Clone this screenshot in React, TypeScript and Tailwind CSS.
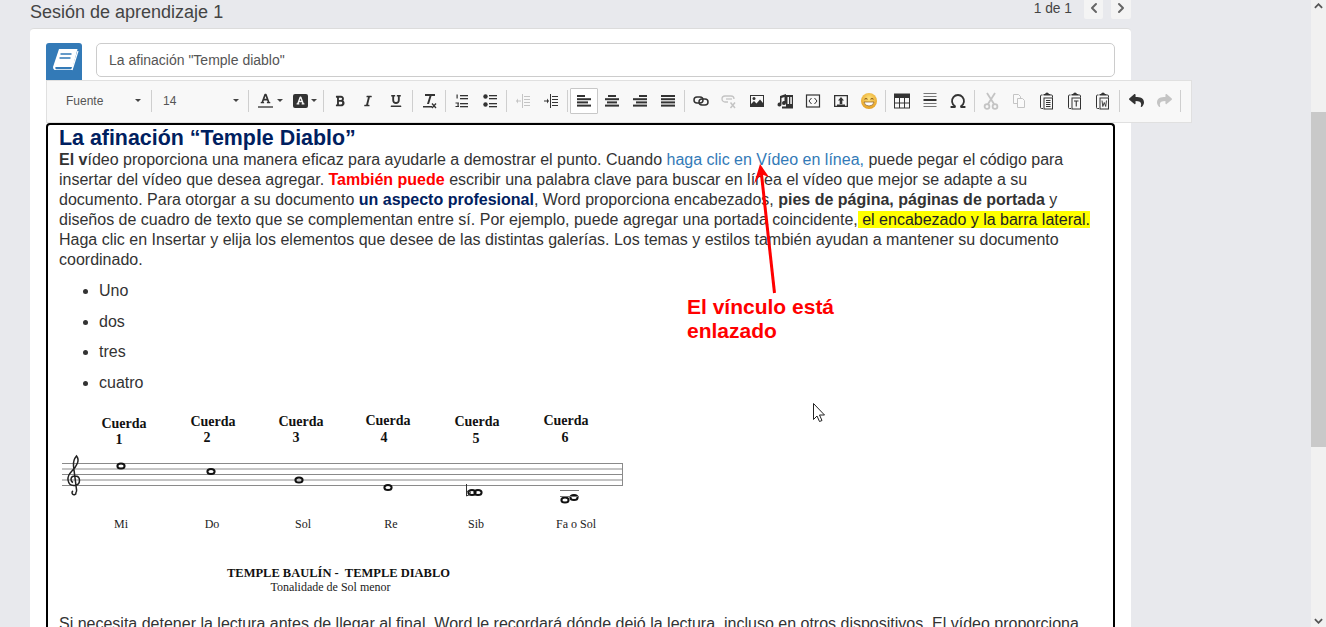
import type { ReactNode } from "react";
import { ChevronLeft, ChevronRight, Omega } from "lucide-react";
import { FaBold, FaFont, FaItalic, FaReply, FaShare, FaUnderline } from "react-icons/fa";

const DARK = "#333333";
const MUTED = "#c4c4c4";

function Icon({ children, muted }: { children: ReactNode; muted?: boolean }) {
  return (
    <svg viewBox="0 0 16 16" className="h-4 w-4" fill={muted ? MUTED : DARK} stroke="none">
      {children}
    </svg>
  );
}

function Btn({ children, active }: { children: ReactNode; active?: boolean }) {
  return (
    <div
      className={`flex h-[26px] w-[28px] shrink-0 items-center justify-center rounded-[1px] ${
        active ? "border border-[#c8c8c8] bg-white" : ""
      }`}
    >
      {children}
    </div>
  );
}

function Sep() {
  return <div className="mx-[2px] h-[22px] w-px shrink-0 bg-[#cfcfcf]" />;
}

function Caret() {
  return <div className="h-0 w-0 border-x-[3px] border-t-[3px] border-x-transparent border-t-[#444]" />;
}

function Lines({ rows }: { rows: [number, number][] }) {
  return (
    <Icon>
      {rows.map(([x, w], i) => (
        <rect key={i} x={x} y={2 + i * 3.2} width={w} height={2} />
      ))}
    </Icon>
  );
}

function Clipboard({ inner }: { inner: ReactNode }) {
  return (
    <svg viewBox="0 0 16 18" className="h-[18px] w-4" fill="none" stroke={DARK}>
      <path d="M3.500 3H2.500q-1 0-1 1v11.500q0 1 1 1H4M11.500 3h1q1 0 1 1v1.500" strokeWidth="1" />
      <path d="M4.500 3.500V2h1.500q.5-1.500 2-1.500t2 1.500h1.500v1.500z" fill={DARK} stroke="none" />
      <rect x="5" y="6" width="8.500" height="11" strokeWidth="1" />
      {inner}
    </svg>
  );
}

function Emoji() {
  return (
    <svg viewBox="0 0 18 18" className="h-[18px] w-[18px]">
      <defs>
        <radialGradient id="face" cx="50%" cy="35%" r="70%">
          <stop offset="0%" stopColor="#ffe27a" />
          <stop offset="100%" stopColor="#e39a1c" />
        </radialGradient>
      </defs>
      <circle cx="9" cy="9" r="8" fill="url(#face)" />
      <path d="M4.500 7.200q1.500-1.300 3 0M10.500 7.200q1.500-1.300 3 0" fill="none" stroke="#7a4a10" strokeWidth="1" />
      <path d="M4 10h10q-.500 4-5 4t-5-4z" fill="#fff" stroke="#8a5a1a" strokeWidth=".7" />
    </svg>
  );
}

function Toolbar() {
  return (
    <div className="relative z-10 flex h-[43px] w-[1146px] items-center border border-[#e0e0e0] bg-[#f8f8f8] pb-[2px] pl-[19px] text-[12px] text-[#555]">
      <div className="flex w-[83px] shrink-0 items-center justify-between pr-[8px]">
        <span>Fuente</span>
        <Caret />
      </div>
      <Sep />
      <div className="flex w-[92px] shrink-0 items-center justify-between pl-[9px] pr-[7px]">
        <span>14</span>
        <Caret />
      </div>
      <Sep />
      <div className="flex w-[35px] shrink-0 items-center gap-[4px] pl-[7px]">
        <div className="flex flex-col items-center">
          <FaFont size={11} color={DARK} />
          <div className="mt-[2px] h-[2px] w-[15px] bg-[#777]" />
        </div>
        <Caret />
      </div>
      <div className="flex w-[35px] shrink-0 items-center gap-[3px] pl-[7px]">
        <div className="flex h-[14px] w-[15px] items-center justify-center rounded-[2px] bg-[#333]">
          <FaFont size={9} color="#f8f8f8" />
        </div>
        <Caret />
      </div>
      <Sep />
      <Btn><FaBold size={12} color={DARK} /></Btn>
      <Btn><FaItalic size={12} color={DARK} /></Btn>
      <Btn><FaUnderline size={12} color={DARK} /></Btn>
      <Sep />
      <Btn>
        <svg viewBox="0 0 16 16" className="h-4 w-4" fill={DARK}>
          <path d="M4 1h10v2h-3.500L8 11H6l2.500-8H4zM2 13h9v1.500H2z" />
          <path d="M11 10.500l4 4.500M15 10.500l-4 4.500" stroke={DARK} strokeWidth="1.300" />
        </svg>
      </Btn>
      <Sep />
      <Btn>
        <Icon>
          <rect x="6" y="2" width="8" height="1.300" />
          <rect x="6" y="5" width="8" height="1.300" />
          <rect x="6" y="10" width="8" height="1.300" />
          <rect x="6" y="13" width="8" height="1.300" />
          <rect x="2.500" y="1.500" width="1.200" height="4" />
          <rect x="1.500" y="9.500" width="3.500" height="1" />
          <rect x="1.500" y="13" width="3.500" height="1" />
          <rect x="3.500" y="10" width="1.200" height="3" />
        </Icon>
      </Btn>
      <Btn>
        <Icon>
          <circle cx="3.500" cy="3.500" r="2.200" />
          <circle cx="3.500" cy="11.500" r="2.200" />
          <rect x="7" y="2" width="8" height="1.300" />
          <rect x="7" y="5" width="8" height="1.300" />
          <rect x="7" y="10" width="8" height="1.300" />
          <rect x="7" y="13" width="8" height="1.300" />
        </Icon>
      </Btn>
      <Sep />
      <Btn>
        <Icon muted>
          <rect x="7" y="1" width="1" height="14" />
          <rect x="9" y="3" width="6" height="1" />
          <rect x="9" y="6" width="6" height="1" />
          <rect x="9" y="9" width="6" height="1" />
          <rect x="9" y="12" width="6" height="1" />
          <path d="M1 7.500h3V5.500l2 2.500-2 2.500V8.500H1z" transform="rotate(180 3.500 8)" />
        </Icon>
      </Btn>
      <Btn>
        <Icon>
          <rect x="7" y="1" width="1" height="14" />
          <rect x="9" y="3" width="6" height="1" />
          <rect x="9" y="6" width="6" height="1" />
          <rect x="9" y="9" width="6" height="1" />
          <rect x="9" y="12" width="6" height="1" />
          <path d="M1 7.500h3V5.500l2 2.500-2 2.500V8.500H1z" />
        </Icon>
      </Btn>
      <Sep />
      <Btn active><Lines rows={[[1, 8], [1, 14], [1, 11], [1, 14]]} /></Btn>
      <Btn><Lines rows={[[4, 8], [1, 14], [3, 10], [1, 14]]} /></Btn>
      <Btn><Lines rows={[[7, 8], [1, 14], [4, 11], [1, 14]]} /></Btn>
      <Btn><Lines rows={[[1, 14], [1, 14], [1, 14], [1, 14]]} /></Btn>
      <Sep />
      <Btn>
        <svg viewBox="0 0 16 16" className="h-4 w-4" fill="none" stroke={DARK} strokeWidth="1.500">
          <rect x="1" y="4" width="9" height="6" rx="3" />
          <rect x="6" y="6" width="9" height="6" rx="3" />
        </svg>
      </Btn>
      <Btn>
        <svg viewBox="0 0 16 16" className="h-4 w-4" fill="none" stroke={MUTED} strokeWidth="1.300">
          <path d="M7 9H4a3 3 0 0 1 0-6h6a3 3 0 0 1 3 3" />
          <path d="M5 6h6" />
          <path d="M9.500 9.500l4.500 5.500M14 9.500L9.500 15" strokeWidth="1.500" />
        </svg>
      </Btn>
      <Btn>
        <svg viewBox="0 0 16 16" className="h-4 w-4" fill={DARK}>
          <path d="M1 2h14v12H1zM2 3v8l3-3 2.500 2.500L11 6.500l3 3.500V3z" fillRule="evenodd" />
          <circle cx="5" cy="5.500" r="1.500" />
        </svg>
      </Btn>
      <Btn>
        <svg viewBox="0 0 18 18" className="h-[18px] w-[18px]" fill={DARK}>
          <rect x="10" y="3" width="7" height="13" />
          <rect x="11.500" y="5" width="1.500" height="7" fill="#f8f8f8" />
          <rect x="14.300" y="5" width="1.500" height="7" fill="#f8f8f8" />
          <path d="M4 4l6-2v9a2 2 0 1 1-1.500-1.900V5L5.500 6v6.500A2 2 0 1 1 4 10.600z" />
          <rect x="6" y="14.500" width="11" height="2" />
        </svg>
      </Btn>
      <Btn>
        <svg viewBox="0 0 16 16" className="h-4 w-4" fill="none" stroke={DARK}>
          <rect x="1.500" y="2" width="13" height="12" strokeWidth="1.200" />
          <path d="M6.500 5L4 8l2.500 3M9.500 5L12 8l-2.500 3" strokeWidth="1" />
        </svg>
      </Btn>
      <Btn>
        <svg viewBox="0 0 16 16" className="h-4 w-4" fill={DARK}>
          <path d="M1 2h14v12H1zM2.300 3.200v9.600h11.400V3.200z" fillRule="evenodd" />
          <path d="M8 4l3 3.500H9.300V11H6.700V7.500H5zM4 11.500h8V13H4z" />
        </svg>
      </Btn>
      <Btn><Emoji /></Btn>
      <Sep />
      <Btn>
        <svg viewBox="0 0 16 16" className="h-4 w-4" fill="none" stroke={DARK}>
          <rect x=".500" y="1" width="15" height="14" strokeWidth="1" />
          <rect x="0" y="1" width="16" height="4" fill={DARK} stroke="none" />
          <path d="M5.500 5v10M10.500 5v10M0 10h16" strokeWidth="1" />
        </svg>
      </Btn>
      <Btn>
        <svg viewBox="0 0 16 16" className="h-4 w-4" fill="#777">
          <rect x="1.500" y="0" width="13" height="1" />
          <rect x="1.500" y="3" width="13" height="1" />
          <rect x="1.500" y="6" width="13" height="2" fill="#333" />
          <rect x="1.500" y="10" width="13" height="1" />
          <rect x="1.500" y="13" width="13" height="1" />
        </svg>
      </Btn>
      <Btn><Omega size={18} color={DARK} strokeWidth={2.4} /></Btn>
      <Sep />
      <Btn>
        <svg viewBox="0 0 16 18" className="h-[18px] w-4" fill="none" stroke={MUTED} strokeWidth="1.800">
          <path d="M4 1l7 11M12 1L5 12" />
          <circle cx="4" cy="14.500" r="2.400" />
          <circle cx="12" cy="14.500" r="2.400" />
        </svg>
      </Btn>
      <Btn>
        <svg viewBox="0 0 16 16" className="h-4 w-4" fill="#fafafa" stroke={MUTED}>
          <path d="M2.500 1.500h5l2 2v7h-7z" />
          <path d="M6.500 5.500h5l2 2v7h-7z" />
        </svg>
      </Btn>
      <Btn>
        <Clipboard inner={<path d="M7 8.500h4.500M7 10.500h4.500M7 12.500h4.500M7 14.500h4.500" strokeWidth="1" />} />
      </Btn>
      <Btn>
        <Clipboard inner={<path d="M7 9h4.500M9.250 9v5.500" strokeWidth="1.100" />} />
      </Btn>
      <Btn>
        <Clipboard inner={<path d="M7 8.500l.8 6 1.450-4 1.450 4 .8-6" strokeWidth=".9" />} />
      </Btn>
      <Sep />
      <Btn><FaReply size={15} color={DARK} /></Btn>
      <Btn><FaShare size={15} color={MUTED} /></Btn>
      <Sep />
    </div>
  );
}

function BookLogo() {
  return (
    <div className="flex h-[37px] w-[36px] shrink-0 items-center justify-center rounded-t-[3px] bg-[#337ab7]">
      <svg viewBox="0 0 36 37" className="h-[37px] w-[36px]">
        <path d="M13 6h18.500l-5.500 21H8.500a3.500 3.500 0 0 1-1.500-3z" fill="#fff" />
        <path d="M9.500 24h16.500l-.600 2.300H9.800q-1-1.200-.300-2.300z" fill="#337ab7" />
        <path d="M14.500 11h11M13.500 15h11" stroke="#337ab7" strokeWidth="1.600" />
        <path d="M26 27l6-19" stroke="#fff" strokeWidth="1.200" />
      </svg>
    </div>
  );
}

function StaffFigure() {
  const labels = [
    { x: 124, y1: 428, nx: 119, y2: 444, n: "1" },
    { x: 213, y1: 426, nx: 207, y2: 442, n: "2" },
    { x: 301, y1: 426, nx: 296, y2: 442, n: "3" },
    { x: 388, y1: 425, nx: 384, y2: 442, n: "4" },
    { x: 477, y1: 426, nx: 476, y2: 443, n: "5" },
    { x: 566, y1: 425, nx: 565, y2: 442, n: "6" },
  ];
  const notes = [
    [121, 466],
    [211, 471.5],
    [299, 480],
    [388, 487.5],
    [472, 492.5],
    [478, 492.5],
    [565, 500],
    [574, 497.5],
  ];
  const names = [
    ["Mi", 121],
    ["Do", 212],
    ["Sol", 303],
    ["Re", 391],
    ["Sib", 476],
    ["Fa o Sol", 576],
  ] as const;
  return (
    <svg viewBox="60 405 566 198" className="ml-[1px] mt-[12px] block h-[198px] w-[566px]" fontFamily="'Liberation Serif', serif">
      {labels.map((l) => (
        <g key={l.n} fontSize="14" fontWeight="700" fill="#111" textAnchor="middle">
          <text x={l.x} y={l.y1}>Cuerda</text>
          <text x={l.nx} y={l.y2}>{l.n}</text>
        </g>
      ))}
      {[463.500, 469, 474.500, 480, 485.500].map((y) => (
        <line key={y} x1="62" x2="623" y1={y} y2={y} stroke="#8a8a8a" strokeWidth="1" />
      ))}
      <line x1="622.500" x2="622.500" y1="463.500" y2="485.500" stroke="#8a8a8a" />
      <path
        d="M73 491a2 2 0 1 0 3 1.500q1-1 .5-3L73.500 466q-.5-6 3-10q2.500 3 1 7q-1.500 4-6 8.500q-4 4-3.500 8.500q1 6 6.500 5.500q5-.5 5-5q0-4.500-4.500-4.500q-4 0-4 3.500q0 2 2 3"
        fill="none"
        stroke="#222"
        strokeWidth="1.500"
      />
      {notes.map(([x, y], i) => (
        <ellipse key={i} cx={x} cy={y} rx="3.600" ry="2.600" fill="none" stroke="#111" strokeWidth="2" />
      ))}
      <path d="M466.500 484v12q4-1 4-3.500t-4-1" fill="none" stroke="#333" strokeWidth="1" />
      <path d="M560 490.500h19M560 496.500h19" stroke="#777" strokeWidth="1" />
      <g fontSize="12" fill="#222" textAnchor="middle">
        {names.map(([t, x]) => (
          <text key={t} x={x} y="528">{t}</text>
        ))}
      </g>
      <text x="338.500" y="577" fontSize="12.500" fontWeight="700" fill="#111" textAnchor="middle" xmlSpace="preserve">
        TEMPLE BAULÍN -  TEMPLE DIABLO
      </text>
      <text x="330.500" y="591" fontSize="12" fill="#222" textAnchor="middle">Tonalidade de Sol menor</text>
    </svg>
  );
}

export default function App() {
  return (
    <div className="relative flex h-[627px] w-[1326px] overflow-hidden bg-[#e8e9ed] font-['Liberation_Sans',Arial,sans-serif] text-[#333]">
      <main className="min-w-0 flex-1 pl-[30px]">
        <div className="w-[1101px]">
          <header className="flex h-[28px] items-start justify-between">
            <h2 className="pt-[1px] text-[18px] leading-[22px] text-[#444]">Sesión de aprendizaje 1</h2>
            <div className="flex items-start">
              <span className="mr-[12px] pt-[1px] text-[13.800px] leading-[16px] text-[#444]">1 de 1</span>
              <div className="-mt-[6px] mr-[8px] flex h-[25px] w-[19px] items-end justify-center rounded-[2px] bg-[#f4f4f4] pb-[3px]">
                <ChevronLeft size={16} color="#666" strokeWidth={3} />
              </div>
              <div className="-mt-[6px] flex h-[25px] w-[20px] items-end justify-center rounded-[2px] bg-[#f4f4f4] pb-[3px]">
                <ChevronRight size={16} color="#666" strokeWidth={3} />
              </div>
            </div>
          </header>

          <section className="rounded-t-[4px] border-t border-[#dcdcdc] bg-white px-[16px] pt-[14px] pb-[40px]">
            <div className="flex items-start gap-[14px]">
              <BookLogo />
              <div className="flex h-[34px] flex-1 items-center rounded-[5px] border border-[#ccc] bg-white pl-[12px] text-[14px] text-[#555]">
                La afinación "Temple diablo"
              </div>
            </div>
            <Toolbar />
            <article className="rounded-t-[4px] border-x-2 border-t-2 border-black bg-white pl-[11px] pr-[10px] pt-[2px]">
              <h1 className="text-[21.400px] font-bold leading-[23px] text-[#002060]">La afinación “Temple Diablo”</h1>
              <p className="whitespace-nowrap text-[16px] leading-[20px] text-[#333]">
                <b>El v</b>ídeo proporciona una manera eficaz para ayudarle a demostrar el punto. Cuando{" "}
                <span className="text-[#337ab7]">haga clic en Vídeo en línea,</span> puede pegar el código para
                <br />
                insertar del vídeo que desea agregar. <b className="text-[#ff0000]">También puede</b> escribir una palabra clave para buscar en línea el vídeo que mejor se adapte a su
                <br />
                documento. Para otorgar a su documento <b className="text-[#002060]">un aspecto profesional</b>, Word proporciona encabezados, <b>pies de página, páginas de portada</b> y
                <br />
                diseños de cuadro de texto que se complementan entre sí. Por ejemplo, puede agregar una portada coincidente,
                <span className="bg-[#ffff00] text-[#222]"> el encabezado y la barra lateral. </span>
                <br />
                Haga clic en Insertar y elija los elementos que desee de las distintas galerías. Los temas y estilos también ayudan a mantener su documento
                <br />
                coordinado.
              </p>
              <ul className="mt-[11px] list-disc pl-[40px] text-[16px] leading-[20px]">
                <li className="mb-[10.700px]">Uno</li>
                <li className="mb-[10.700px]">dos</li>
                <li className="mb-[10.700px]">tres</li>
                <li>cuatro</li>
              </ul>
              <StaffFigure />
              <p className="mt-[11px] whitespace-nowrap text-[16px] leading-[20px]">
                Si necesita detener la lectura antes de llegar al final, Word le recordará dónde dejó la lectura, incluso en otros dispositivos. El vídeo proporciona
              </p>
            </article>
          </section>
        </div>
      </main>

      <aside className="flex w-[15px] shrink-0 flex-col bg-[#f1f1f1]">
        <div className="flex h-[112px] items-start justify-center pt-[3px]">
          <svg viewBox="0 0 10 6" className="h-[6px] w-[9px]" fill="none" stroke="#555" strokeWidth="2">
            <path d="M1 5l4-4 4 4" />
          </svg>
        </div>
        <div className="h-[335px] bg-[#c9c9c9]" />
        <div className="flex flex-1 items-end justify-center pb-[3px]">
          <svg viewBox="0 0 10 6" className="h-[6px] w-[9px]" fill="none" stroke="#555" strokeWidth="2">
            <path d="M1 1l4 4 4-4" />
          </svg>
        </div>
      </aside>

      {/* annotation pasted over the shot */}
      <div className="pointer-events-none absolute left-[687px] top-[295px] text-[21px] font-bold leading-[24px] text-[#ff0000]">
        El vínculo está
        <br />
        enlazado
      </div>
      <svg viewBox="0 0 1326 627" className="pointer-events-none absolute inset-0 h-[627px] w-[1326px]">
        <path d="M774.500 293L761 170" stroke="#ff0000" strokeWidth="3" fill="none" />
        <path d="M760 164l9 13-8-3-7 10z" fill="#ff0000" />
        <path d="M813.500 403.500v16l3.500-3.500 2.500 5.500 2.500-1-2.500-5.500h5z" fill="#fff" stroke="#222" strokeWidth="1" />
      </svg>
    </div>
  );
}
